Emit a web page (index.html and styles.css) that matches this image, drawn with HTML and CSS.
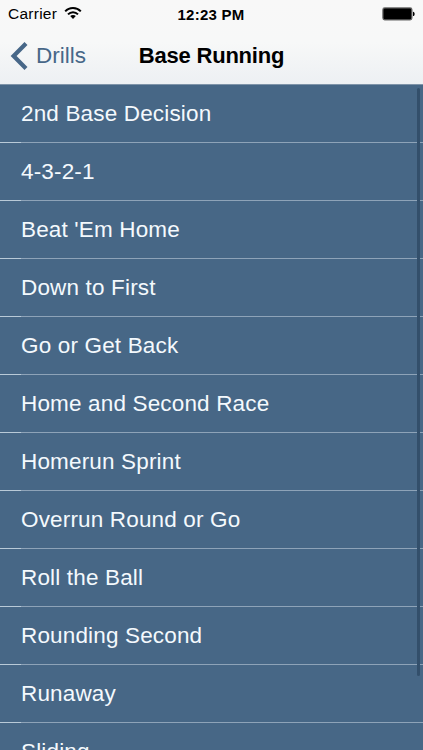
FILE: index.html
```html
<!DOCTYPE html>
<html lang="en">
<head>
  <meta charset="UTF-8" />
  <meta name="viewport" content="width=device-width, initial-scale=1.0" />
  <title>Base Running</title>
  <link rel="stylesheet" href="styles.css">
</head>
<body>
  <header>
    <div class="status-bar">
      <div class="carrier">
        <span>Carrier</span>
        <svg class="wifi" width="18" height="14" viewBox="0 0 18 14" fill="none" stroke="#000" stroke-width="2">
          <path d="M1.2 5.4C5.4 0.9 12.6 0.9 16.8 5.4" />
          <path d="M4 8.4C6.8 5.4 11.2 5.4 14 8.4" />
          <path d="M9 13L6.2 10.1C7.8 8.6 10.2 8.6 11.8 10.1Z" fill="#000" stroke="none" />
        </svg>
      </div>
      <div class="time">12:23 PM</div>
      <svg class="battery" width="34" height="14" viewBox="0 0 34 14">
        <rect x="0.9" y="0.9" width="29" height="12" rx="1.8" fill="#000" stroke="#666" stroke-width="1.2" />
        <path d="M31 4.7C33.2 4.9 33.2 8.9 31 9.1Z" fill="#000" />
      </svg>
    </div>
    <nav>
      <a class="back" href="#">
        <svg width="18" height="28" viewBox="0 0 18 28" fill="none" stroke="#476788" stroke-width="4.2">
          <path d="M16 1.5L3.6 14L16 26.5" />
        </svg>
        <span>Drills</span>
      </a>
      <h1>Base Running</h1>
    </nav>
  </header>

  <main>
    <ul class="drills">
      <li>2nd Base Decision</li>
      <li>4-3-2-1</li>
      <li>Beat 'Em Home</li>
      <li>Down to First</li>
      <li>Go or Get Back</li>
      <li>Home and Second Race</li>
      <li>Homerun Sprint</li>
      <li>Overrun Round or Go</li>
      <li>Roll the Ball</li>
      <li>Rounding Second</li>
      <li>Runaway</li>
      <li>Sliding</li>
    </ul>
    <div class="scrollbar"></div>
  </main>
</body>
</html>
```

FILE: styles.css
```css
body {
  margin: 0;
  height: 750px;
  display: flex;
  flex-direction: column;
  overflow: hidden;
  font-family: "Liberation Sans", Arial, sans-serif;
  background-color: #476786;
}

header {
  flex: none;
  height: 85px;
  background: linear-gradient(#f8f8f8 0%, #f7f8f8 50%, #edf0f3 100%);
  border-bottom: 1px solid #7f94a9;
  box-sizing: border-box;
}

.status-bar {
  display: grid;
  grid-template-columns: 1fr auto 1fr;
  align-items: center;
  height: 28px;
  padding: 0 7px 0 8px;
}

.carrier {
  display: flex;
  align-items: center;
  gap: 7px;
  font-size: 15.5px;
  letter-spacing: 0.25px;
}

.wifi {
  margin-top: -2px;
}

.time {
  font-size: 15px;
  font-weight: bold;
  letter-spacing: 0.25px;
  margin-right: 2px;
}

.battery {
  justify-self: end;
}

nav {
  display: grid;
  grid-template-columns: 1fr auto 1fr;
  align-items: center;
  height: 55px;
  padding: 0 10px;
}

.back {
  display: flex;
  align-items: center;
  gap: 8px;
  color: #476788;
  font-size: 22.5px;
  text-decoration: none;
}

h1 {
  margin: 0;
  font-size: 22px;
  font-weight: bold;
  letter-spacing: -0.2px;
}

main {
  position: relative;
  flex: 1;
  overflow: hidden;
}

.drills {
  margin: 0;
  padding: 0;
  list-style: none;
}

.drills li {
  height: 58px;
  box-sizing: border-box;
  padding-left: 21px;
  line-height: 58px;
  font-size: 22.5px;
  letter-spacing: 0.16px;
  color: #f4f9fd;
  /* separator is lighter in the left inset */
  background: linear-gradient(90deg, #b9cad8 21px, #8ea3b8 21px) bottom / 100% 1px no-repeat;
}

.scrollbar {
  position: absolute;
  top: 3px;
  right: 3px;
  width: 3px;
  height: 588px;
  border-radius: 2px;
  background-color: #334f6b;
}
```
